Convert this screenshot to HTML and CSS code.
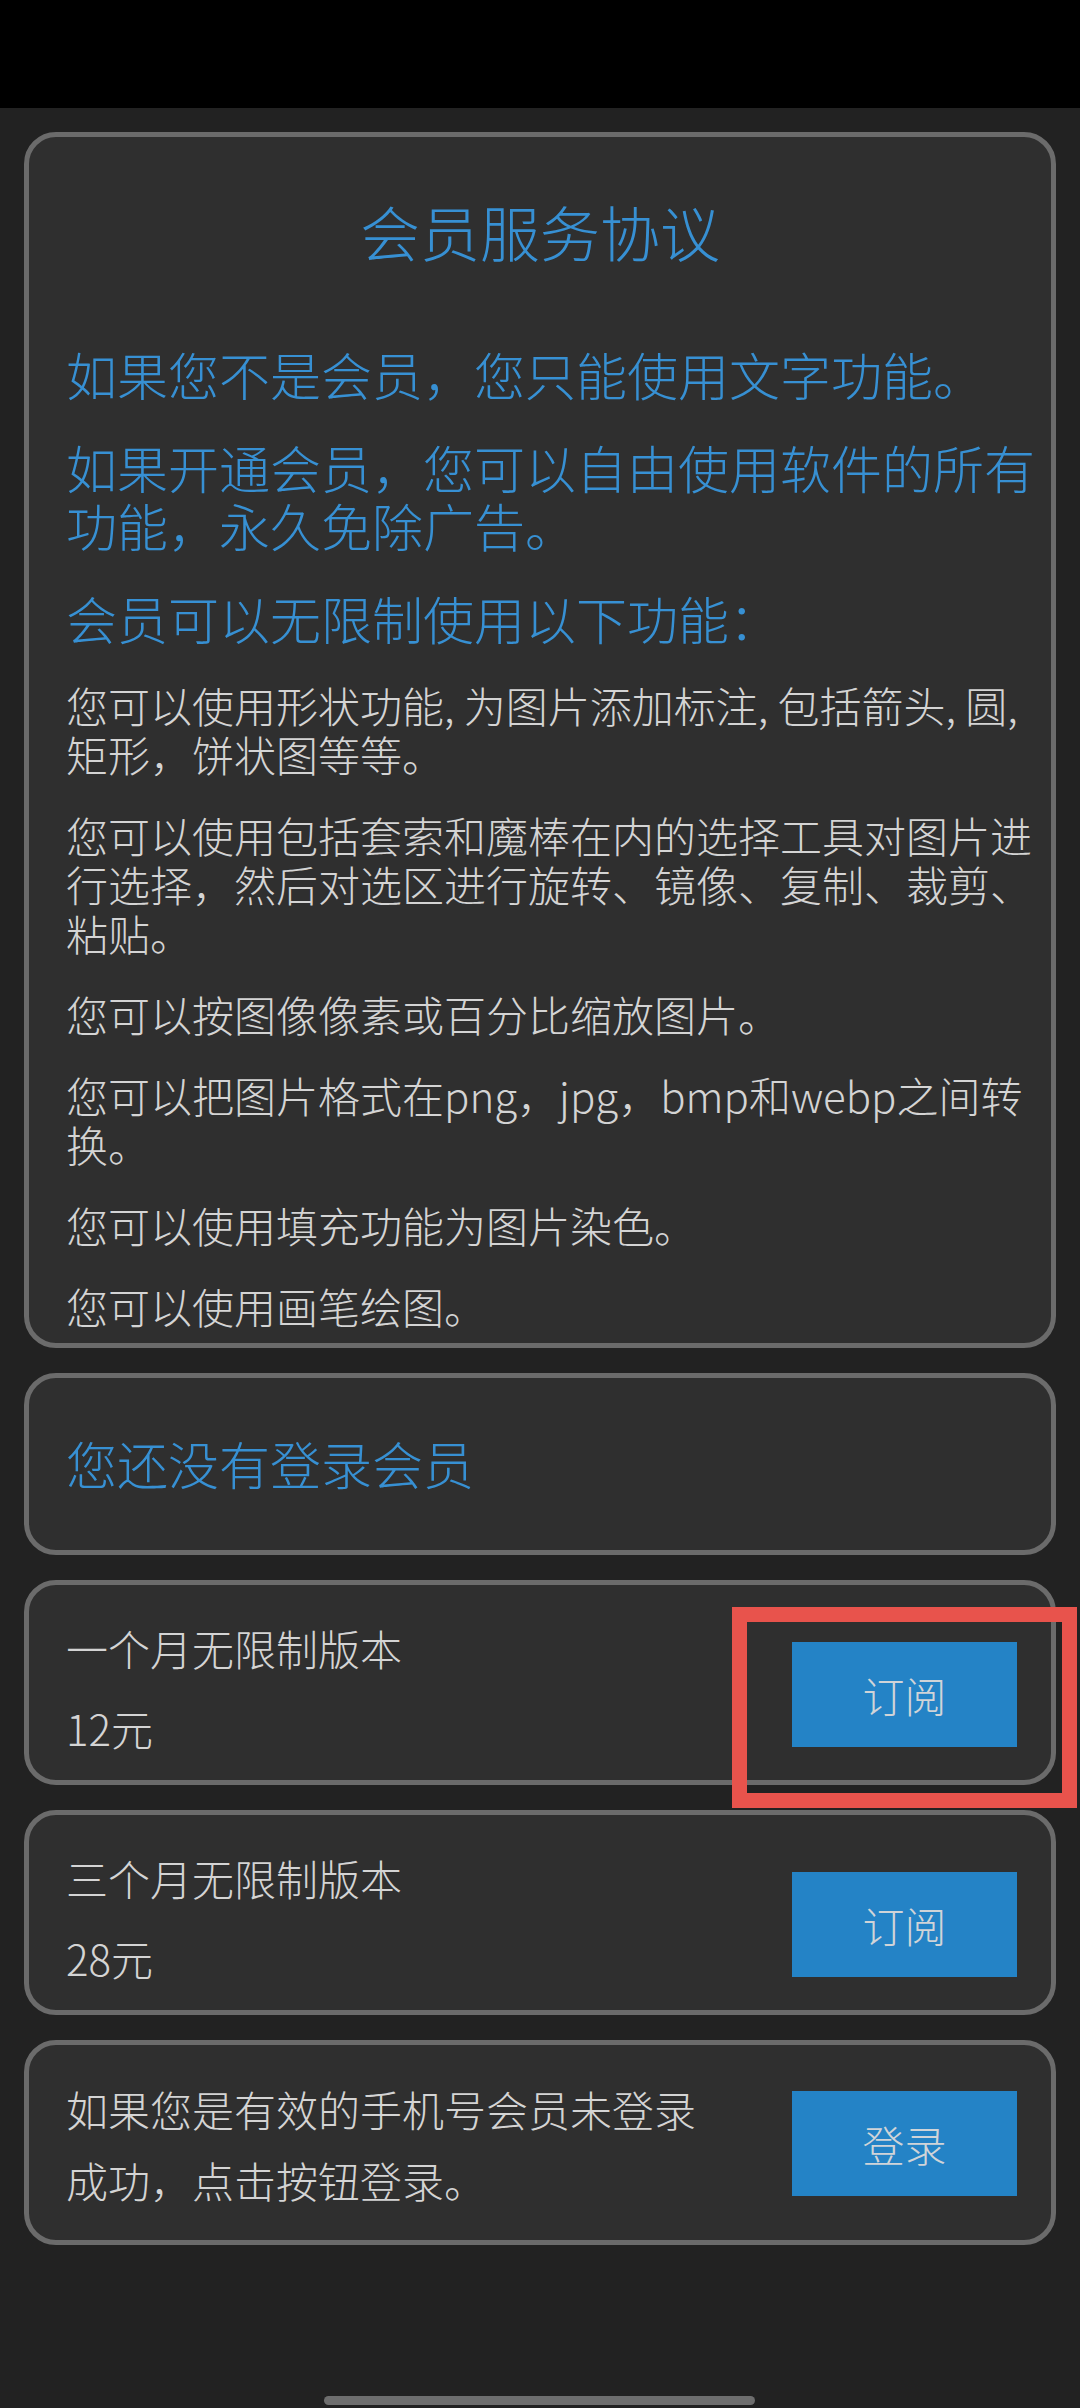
FILE: index.html
```html
<!DOCTYPE html>
<html lang="zh-CN">
<head>
<meta charset="utf-8">
<title>会员服务协议</title>
<link rel="stylesheet" href="styles.css">
</head>
<body>
<div class="screen">
  <div class="status-bar"></div>
  <main class="content">
    <section class="card agreement">
      <h1 class="title">会员服务协议</h1>
      <p class="lead">如果您不是会员，您只能使用文字功能。</p>
      <p class="lead">如果开通会员，您可以自由使用软件的所有功能，永久免除广告。</p>
      <p class="lead">会员可以无限制使用以下功能：</p>
      <p class="feature first">您可以使用形状功能, 为图片添加标注, 包括箭头, 圆, 矩形，饼状图等等。</p>
      <p class="feature">您可以使用包括套索和魔棒在内的选择工具对图片进行选择，然后对选区进行旋转、镜像、复制、裁剪、粘贴。</p>
      <p class="feature">您可以按图像像素或百分比缩放图片。</p>
      <p class="feature">您可以把图片格式在png，jpg，bmp和webp之间转换。</p>
      <p class="feature">您可以使用填充功能为图片染色。</p>
      <p class="feature">您可以使用画笔绘图。</p>
    </section>

    <section class="card status">
      <p class="status-text">您还没有登录会员</p>
    </section>

    <section class="card plan">
      <div class="plan-info">
        <div class="plan-line">一个月无限制版本</div>
        <div class="plan-line price">12元</div>
      </div>
      <button class="action">订阅</button>
      <div class="highlight"></div>
    </section>

    <section class="card plan">
      <div class="plan-info">
        <div class="plan-line">三个月无限制版本</div>
        <div class="plan-line price">28元</div>
      </div>
      <button class="action">订阅</button>
    </section>

    <section class="card login">
      <div class="login-info">
        <div class="login-text">如果您是有效的手机号会员未登录成功，点击按钮登录。</div>
      </div>
      <button class="action">登录</button>
    </section>
  </main>
  <div class="home-indicator"></div>
</div>
</body>
</html>
```

FILE: styles.css
```css
* {
  box-sizing: border-box;
}

html, body {
  margin: 0;
  padding: 0;
  background: #222222;
}

body {
  font-family: "Noto Sans CJK SC", "Noto Sans", sans-serif;
  font-weight: 300;
  color: #d4d4d4;
}

.screen {
  width: 1080px;
  height: 2408px;
  overflow: hidden;
  display: flex;
  flex-direction: column;
  background: #222222;
}

.status-bar {
  height: 108px;
  background: #000000;
  flex: none;
}

.content {
  display: flex;
  flex-direction: column;
  gap: 25px;
  padding: 24px 24px 0 24px;
}

.card {
  background: #2f2f2f;
  border: 5px solid #6b6b6b;
  border-radius: 32px;
  position: relative;
}

/* Agreement card */
.agreement {
  padding: 54px 11px 13px 37px;
}

.title {
  margin: 0;
  font-size: 60px;
  line-height: 80px;
  font-weight: 300;
  color: #3790d3;
  text-align: center;
  padding-right: 26px;
}

.lead {
  margin: 35px 0 0 0;
  font-size: 51px;
  line-height: 58px;
  color: #3790d3;
}

.title + .lead {
  margin-top: 74px;
}

.feature {
  margin: 32px 0 0 0;
  font-size: 42px;
  line-height: 49px;
  color: #d4d4d4;
}

.feature.first {
  margin-top: 33px;
}

/* Status card */
.status {
  height: 182px;
  padding: 56px 37px 0 37px;
}

.status-text {
  margin: 0;
  font-size: 51px;
  line-height: 58px;
  color: #3790d3;
}

/* Plan cards */
.plan {
  height: 205px;
  display: flex;
  align-items: flex-start;
  gap: 76px;
  padding: 35px 34px 24px 37px;
}

.plan-info {
  flex: 1;
  display: flex;
  flex-direction: column;
  gap: 24px;
}

.plan-line {
  font-size: 42px;
  line-height: 56px;
  color: #d4d4d4;
}

.action {
  flex: none;
  width: 225px;
  height: 105px;
  margin: 0;
  border: none;
  border-radius: 0;
  background: #2483c6;
  color: #d0d4d8;
  font-family: "Noto Sans CJK SC", "Noto Sans", sans-serif;
  font-weight: 300;
  font-size: 42px;
  line-height: 105px;
  padding: 0;
  text-align: center;
}

.plan .action {
  margin-top: 22px;
}

/* Login card */
.login {
  height: 205px;
  display: flex;
  align-items: center;
  gap: 76px;
  padding: 35px 34px 33px 37px;
}

.login-info {
  flex: 1;
}

.login-text {
  font-size: 42px;
  line-height: 71px;
  color: #d4d4d4;
  margin-top: -8px;
  margin-bottom: -8px;
}

/* Red annotation frame */
.highlight {
  position: absolute;
  left: 703px;
  top: 22px;
  width: 345px;
  height: 201px;
  border: 15px solid #e8534c;
}

.home-indicator {
  width: 431px;
  height: 9px;
  border-radius: 5px;
  background: #6e6e6e;
  margin: auto 0 3px 324px;
  flex: none;
}
```
